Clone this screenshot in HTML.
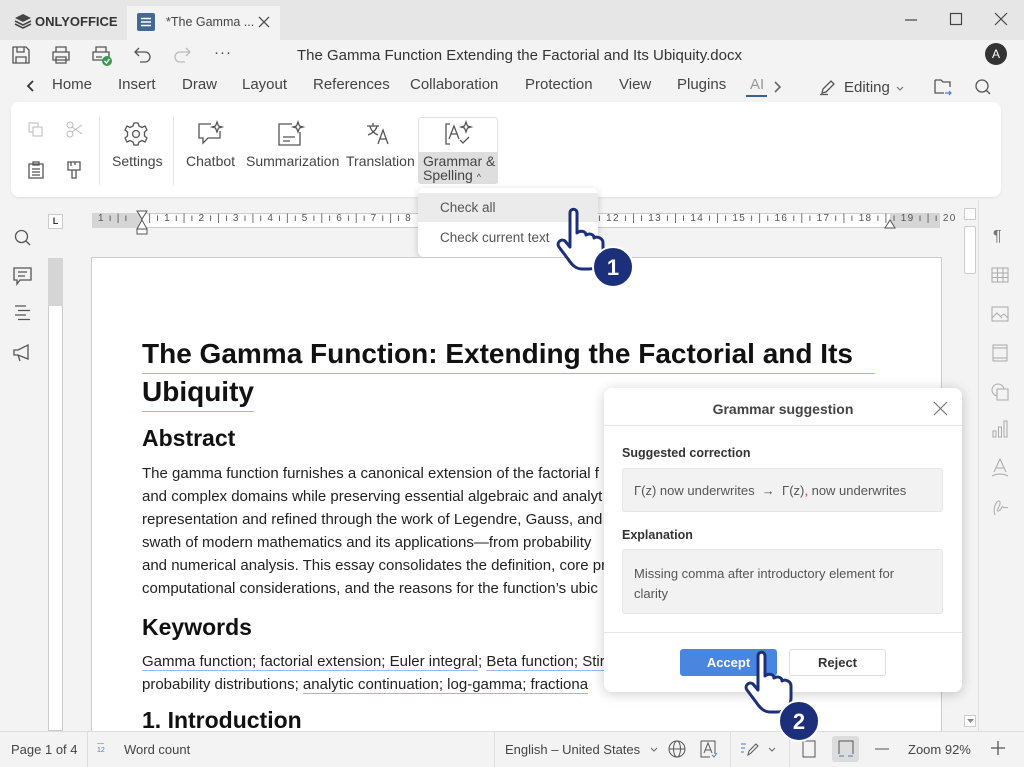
<!DOCTYPE html>
<html><head><meta charset="utf-8"><style>
*{margin:0;padding:0;box-sizing:border-box}
body{width:1024px;height:767px;overflow:hidden;background:#f3f3f3;font-family:"Liberation Sans","DejaVu Sans",sans-serif;color:#333;position:relative}
.a{position:absolute}
.t{position:absolute;white-space:nowrap}
svg{position:absolute;overflow:visible}
.ic{fill:none;stroke:#555;stroke-width:1.3}
.doc{font-size:15px;color:#222;line-height:23px}
.u{border-bottom:1.5px solid #9bb8e8}
</style></head><body>
<!-- title bar -->
<div class="a" style="left:0;top:0;width:1024px;height:40px;background:#e6e6e6"></div>
<div class="a" style="left:127px;top:6px;width:153px;height:34px;background:#f3f3f3"></div>
<svg style="left:14px;top:13px" width="18" height="16"><path d="M9 1 L17 5 L9 9 L1 5Z" fill="#444"/><path d="M1 8 L9 12 L17 8 M1 11 L9 15 L17 11" stroke="#444" stroke-width="1.6" fill="none"/></svg>
<div class="t" style="left:35px;top:14px;font-size:13px;font-weight:bold;color:#333">ONLYOFFICE</div>
<div class="a" style="left:137px;top:13px;width:18px;height:18px;background:#446995;border-radius:2px"></div>
<svg style="left:141px;top:17px" width="10" height="10"><path d="M0 1.5H10M0 5H10M0 8.5H10" stroke="#fff" stroke-width="1.4"/></svg>
<div class="t" style="left:166px;top:15px;font-size:12.5px;color:#444">*The Gamma ...</div>
<svg style="left:259px;top:17px" width="10" height="10"><path d="M0 0L10 10M10 0L0 10" stroke="#555" stroke-width="1.3"/></svg>
<svg style="left:905px;top:19px" width="12" height="2"><path d="M0 1H12" stroke="#444" stroke-width="1.2"/></svg>
<svg style="left:950px;top:13px" width="12" height="12"><rect x=".5" y=".5" width="11" height="11" fill="none" stroke="#444" stroke-width="1.2"/></svg>
<svg style="left:995px;top:13px" width="12" height="12"><path d="M0 0L12 12M12 0L0 12" stroke="#444" stroke-width="1.2"/></svg>
<!-- quick bar -->
<svg style="left:12px;top:46px" width="18" height="18"><path class="ic" d="M1 1H14L17 4V17H1Z M5 1V6H12V1 M4 17V11H14V17"/></svg>
<svg style="left:52px;top:46px" width="18" height="18"><path class="ic" d="M4 6V1H14V6 M1 6H17V14H1Z M4 11H14V17H4Z"/></svg>
<svg style="left:92px;top:46px" width="20" height="20"><path class="ic" d="M4 6V1H14V6 M1 6H17V14H1Z M4 11H10"/><circle cx="15" cy="15" r="5" fill="#3a9a52"/><path d="M12.5 15L14.5 17L17.5 13" stroke="#fff" stroke-width="1.3" fill="none"/></svg>
<svg style="left:134px;top:47px" width="18" height="16"><path class="ic" d="M5 1L1 5L5 9 M1 5H11A5 5 0 0 1 11 15H6"/></svg>
<svg style="left:173px;top:47px" width="18" height="16"><path d="M13 1L17 5L13 9 M17 5H7A5 5 0 0 0 7 15H12" fill="none" stroke="#bbb" stroke-width="1.3"/></svg>
<div class="t" style="left:214px;top:44px;font-size:15px;color:#444;letter-spacing:1px">···</div>
<div class="t" style="left:297px;top:47px;font-size:15px;color:#333">The Gamma Function Extending the Factorial and Its Ubiquity.docx</div>
<div class="a" style="left:985px;top:43px;width:22px;height:22px;border-radius:50%;background:#333;color:#fff;font-size:12px;text-align:center;line-height:22px">A</div>
<!-- menu -->
<svg style="left:27px;top:80px" width="8" height="12"><path d="M6 1L1 6L6 11" stroke="#333" stroke-width="1.8" fill="none"/></svg>
<div class="t" style="top:76px;font-size:15px;color:#444;left:52px">Home</div>
<div class="t" style="top:76px;font-size:15px;color:#444;left:118px">Insert</div>
<div class="t" style="top:76px;font-size:15px;color:#444;left:182px">Draw</div>
<div class="t" style="top:76px;font-size:15px;color:#444;left:242px">Layout</div>
<div class="t" style="top:76px;font-size:15px;color:#444;left:313px">References</div>
<div class="t" style="top:76px;font-size:15px;color:#444;left:410px">Collaboration</div>
<div class="t" style="top:76px;font-size:15px;color:#444;left:525px">Protection</div>
<div class="t" style="top:76px;font-size:15px;color:#444;left:619px">View</div>
<div class="t" style="top:76px;font-size:15px;color:#444;left:677px">Plugins</div>
<div class="t" style="top:76px;font-size:15px;color:#999;left:750px">AI</div>
<div class="a" style="left:746px;top:95px;width:21px;height:2px;background:#3d5f8d"></div>
<svg style="left:774px;top:81px" width="8" height="12"><path d="M1 1L6 6L1 11" stroke="#666" stroke-width="1.6" fill="none"/></svg>
<svg style="left:820px;top:79px" width="16" height="16"><path class="ic" d="M2 14L3 10L11 2L14 5L6 13Z M0 15.5H8"/></svg>
<div class="t" style="left:844px;top:79px;font-size:15px;color:#444">Editing</div>
<svg style="left:896px;top:86px" width="8" height="5"><path d="M1 1L4 4L7 1" stroke="#666" fill="none"/></svg>
<svg style="left:934px;top:78px" width="18" height="18"><path class="ic" d="M1 2H7L9 4H16V9 M1 2V15H10"/><path d="M11 15H17M15 13L17 15L15 17" stroke="#4a7bd0" stroke-width="1.2" fill="none"/></svg>
<svg style="left:975px;top:79px" width="16" height="16"><circle cx="7" cy="7" r="6" class="ic"/><path d="M11 11L15 15" class="ic"/></svg>
<!-- toolbar panel -->
<div class="a" style="left:11px;top:102px;width:990px;height:95px;background:#fff;border-radius:8px;box-shadow:0 1px 2px rgba(0,0,0,.08)"></div>
<svg style="left:28px;top:122px" width="16" height="16"><rect x="1" y="1" width="9" height="9" fill="none" stroke="#bbb"/><rect x="5" y="5" width="9" height="9" fill="#fff" stroke="#bbb"/></svg>
<svg style="left:66px;top:121px" width="17" height="17"><circle cx="4" cy="4" r="3" fill="none" stroke="#bbb"/><circle cx="4" cy="13" r="3" fill="none" stroke="#bbb"/><path d="M6 6L16 13M6 11L16 4" stroke="#bbb"/></svg>
<svg style="left:28px;top:161px" width="16" height="18"><path class="ic" d="M1 3H15V17H1Z M5 1H11V4H5Z M4 8H12M4 11H12M4 14H12"/></svg>
<svg style="left:67px;top:161px" width="14" height="18"><path class="ic" d="M1 1H13V9H1Z M5 9V17H9V9 M4 1V5 M8 1V4"/></svg>
<div class="a" style="left:99px;top:117px;width:1px;height:68px;background:#e4e4e4"></div>
<svg style="left:124px;top:122px" width="24" height="24"><circle cx="12" cy="12" r="3.5" class="ic"/><path class="ic" d="M10 1H14L15 4L18 5.5L21 4L23 8L20.5 10V14L23 16L21 20L18 18.5L15 20L14 23H10L9 20L6 18.5L3 20L1 16L3.5 14V10L1 8L3 4L6 5.5L9 4Z"/></svg>
<div class="t" style="left:112px;top:153px;font-size:14px;color:#444">Settings</div>
<div class="a" style="left:173px;top:117px;width:1px;height:68px;background:#e4e4e4"></div>
<svg style="left:197px;top:122px" width="26" height="24"><path class="ic" d="M14 2H2V16H6V21L11 16H23V9"/><path d="M20 0L21.5 4L25 5L21.5 6L20 10L18.5 6L15 5L18.5 4Z" class="ic" stroke-width="1.1"/></svg>
<div class="t" style="left:186px;top:153px;font-size:14px;color:#444">Chatbot</div>
<svg style="left:278px;top:122px" width="26" height="24"><path class="ic" d="M14 2H1V23H22V10 M5 15H17M5 19H12"/><path d="M20 0L21.5 4L25 5L21.5 6L20 10L18.5 6L15 5L18.5 4Z" class="ic" stroke-width="1.1"/></svg>
<div class="t" style="left:246px;top:153px;font-size:14px;color:#444">Summarization</div>
<svg style="left:366px;top:122px" width="26" height="24"><path class="ic" d="M1 4H13M7 1V4M4 4C5 9 9 12 12 13M11 4C10 9 5 12 2 13"/><path class="ic" d="M12 22L17 8L22 22M14 17H20"/></svg>
<div class="t" style="left:346px;top:153px;font-size:14px;color:#444">Translation</div>
<svg style="left:375px;top:175px" width="7" height="4"><path d=".5 .5L3.5 3.5L6.5 .5" stroke="#777" fill="none"/></svg>
<div class="a" style="left:418px;top:117px;width:80px;height:67px;border-radius:3px;background:#fff;border:1px solid #e2e2e2"></div>
<div class="a" style="left:418px;top:152px;width:80px;height:32px;background:#dedede;border-radius:0 0 3px 3px"></div>
<svg style="left:445px;top:122px" width="28" height="24"><path class="ic" d="M5 2H1V22H5"/><path class="ic" d="M4 17L9 4L14 17M6 12H12"/><path class="ic" d="M15 18L18 21L24 15"/><path d="M21 0L22.5 4L26 5L22.5 6L21 10L19.5 6L16 5L19.5 4Z" class="ic" stroke-width="1.1"/></svg>
<div class="t" style="left:423px;top:154px;font-size:14px;color:#444;line-height:14px">Grammar &amp;<br>Spelling <span style="font-size:9px">^</span></div>
<!-- left sidebar -->
<svg style="left:14px;top:229px" width="18" height="18"><circle cx="7.5" cy="7.5" r="6" class="ic"/><path d="M12 12L16 16" class="ic"/></svg>
<svg style="left:13px;top:267px" width="20" height="20"><path class="ic" d="M1 1H18V13H7L4 17V13H1Z M5 5H14M5 9H12"/></svg>
<svg style="left:14px;top:305px" width="18" height="16"><path class="ic" d="M1 1H12M4 5.5H16M1 10H12M4 14.5H16"/></svg>
<svg style="left:13px;top:344px" width="20" height="18"><path class="ic" d="M1 6H5L15 1V15L5 11H1Z M5 11L7 17"/></svg>
<!-- ruler -->
<div class="a" style="left:48px;top:214px;width:15px;height:15px;background:#fff;border:1px solid #ccc;font-size:9px;font-weight:bold;text-align:center;line-height:13px">L</div>
<div class="a" style="left:92px;top:213px;width:848px;height:15px;background:#fff;border:1px solid #ccc"></div>
<div class="a" style="left:92px;top:213px;width:50px;height:15px;background:#d5d5d5"></div>
<div class="a" style="left:890px;top:213px;width:50px;height:15px;background:#d5d5d5"></div>
<div class="t" style="left:98px;top:213px;font-size:10px;color:#555;letter-spacing:1.2px">1 ı | ı &nbsp;&nbsp;ı | ı 1 ı | ı 2 ı | ı 3 ı | ı 4 ı | ı 5 ı | ı 6 ı | ı 7 ı | ı 8</div>
<div class="t" style="left:598px;top:213px;font-size:10px;color:#555;letter-spacing:1.3px">ı 12 ı | ı 13 ı | ı 14 ı | ı 15 ı | ı 16 ı | ı 17 ı | ı 18 ı | ı 19 ı | ı 20</div>
<svg style="left:136px;top:210px" width="12" height="25"><path d="M1 1H11L6 9Z M1 19L6 10L11 19Z" fill="#fff" stroke="#555"/><rect x="1" y="19" width="10" height="5" fill="#fff" stroke="#555"/></svg>
<svg style="left:884px;top:219px" width="12" height="10"><path d="M1 9L6 1L11 9Z" fill="#fff" stroke="#555"/></svg>
<!-- dropdown -->
<div class="a" style="left:418px;top:188px;width:180px;height:69px;background:#fff;border-radius:6px;box-shadow:0 2px 8px rgba(0,0,0,.18)"></div>
<div class="a" style="left:418px;top:193px;width:180px;height:29px;background:#ebebeb"></div>
<div class="t" style="left:440px;top:200px;font-size:13.5px;color:#555">Check all</div>
<div class="t" style="left:440px;top:230px;font-size:13.5px;color:#555">Check current text</div>
<!-- vertical ruler -->
<div class="a" style="left:48px;top:258px;width:15px;height:473px;background:#fff;border:1px solid #ccc"></div>
<div class="a" style="left:48px;top:258px;width:15px;height:48px;background:#d5d5d5"></div>
<!-- page -->
<div class="a" style="left:91px;top:257px;width:851px;height:480px;background:#fff;border:1px solid #ccc"></div>
<div class="t" style="left:142px;top:335px;font-size:28px;font-weight:bold;color:#111;line-height:38px;border-bottom:1.5px solid #9bb8e8;width:733px">The Gamma Function: Extending the Factorial and Its</div>
<div class="t" style="left:142px;top:373px;font-size:28px;font-weight:bold;color:#111;line-height:38px;border-bottom:1.5px solid #9bb8e8">Ubiquity</div>
<div class="t" style="left:142px;top:425px;font-size:23px;font-weight:bold;color:#111">Abstract</div>
<div class="t doc" style="left:142px;top:462px">The gamma function furnishes a canonical extension of the factorial f<br>and complex domains while preserving essential algebraic and analyt<br>representation and refined through the work of Legendre, Gauss, and<br>swath of modern mathematics and its applications—from probability<br>and numerical analysis. This essay consolidates the definition, core pr<br>computational considerations, and the reasons for the function’s ubic</div>
<div class="t" style="left:142px;top:614px;font-size:23px;font-weight:bold;color:#111">Keywords</div>
<div class="t doc" style="left:142px;top:650px"><span class="u">Gamma function; factorial extension; Euler integral</span>; <span class="u">Beta function; Stir</span><br>probability distributions; <span class="u">analytic continuation; log-gamma; fractiona</span></div>
<div class="a" style="left:142px;top:707px;width:480px;height:24px;overflow:hidden"><div class="t" style="left:0;top:0;font-size:23px;font-weight:bold;color:#111">1. Introduction</div></div>
<!-- scrollbar -->
<div class="a" style="left:963px;top:207px;width:14px;height:524px;background:#f3f3f3"></div>
<div class="a" style="left:964px;top:208px;width:12px;height:12px;border:1px solid #ccc;background:#fff"></div>
<div class="a" style="left:964px;top:226px;width:12px;height:48px;border:1px solid #ccc;background:#fff;border-radius:2px"></div>
<div class="a" style="left:964px;top:715px;width:12px;height:12px;border:1px solid #ccc;background:#fff"></div>
<svg style="left:967px;top:719px" width="7" height="4"><path d="M0 0H7L3.5 4Z" fill="#888"/></svg>
<div class="a" style="left:978px;top:200px;width:1px;height:531px;background:#ddd"></div>
<!-- right sidebar -->
<div class="t" style="left:993px;top:228px;font-size:16px;color:#777">¶</div>
<svg style="left:991px;top:267px" width="18" height="16"><path d="M1 1H17V15H1Z M1 6H17M1 10.5H17M6.5 1V15M12 1V15" fill="none" stroke="#aaa"/></svg>
<svg style="left:991px;top:306px" width="18" height="16"><path d="M1 1H17V15H1Z M1 12L6 7L11 12M10 10L13 8L17 12" fill="none" stroke="#aaa"/></svg>
<svg style="left:991px;top:344px" width="18" height="18"><path d="M2 1H16V17H2Z M2 4H16M2 14H16" fill="none" stroke="#aaa"/></svg>
<svg style="left:991px;top:383px" width="18" height="18"><circle cx="7" cy="7" r="6" fill="none" stroke="#aaa"/><rect x="6" y="6" width="11" height="11" fill="#f3f3f3" stroke="#aaa"/></svg>
<svg style="left:991px;top:420px" width="18" height="18"><path d="M2 11H5V17H2Z M7.5 7H10.5V17H7.5Z M13 1H16V17H13Z" fill="none" stroke="#aaa"/></svg>
<svg style="left:991px;top:458px" width="18" height="20"><path d="M3 14L9 1L15 14M5 10H13M1 18Q9 14 17 18" fill="none" stroke="#aaa"/></svg>
<svg style="left:991px;top:497px" width="18" height="20"><path d="M4 18C1 10 7 1 9 5C10 9 4 14 7 14C10 14 11 8 12 10C13 12 15 9 17 11" fill="none" stroke="#aaa"/></svg>
<!-- grammar dialog -->
<div class="a" style="left:604px;top:388px;width:358px;height:304px;background:#fff;border-radius:8px;box-shadow:0 2px 12px rgba(0,0,0,.2)"></div>
<div class="a" style="left:604px;top:425px;width:358px;height:1px;background:#e6e6e6"></div>
<div class="t" style="left:604px;top:401px;width:358px;text-align:center;font-size:14px;font-weight:bold;color:#444">Grammar suggestion</div>
<svg style="left:934px;top:402px" width="13" height="13"><path d="M0 0L13 13M13 0L0 13" stroke="#777" stroke-width="1.2"/></svg>
<div class="t" style="left:622px;top:446px;font-size:12.5px;font-weight:bold;color:#333">Suggested correction</div>
<div class="a" style="left:622px;top:468px;width:321px;height:44px;background:#f2f2f2;border:1px solid #e6e6e6;border-radius:3px"></div>
<div class="t" style="left:634px;top:483px;font-size:13px;color:#555">Γ(z) now underwrites &nbsp;→ &nbsp;Γ(z)<span style="color:#e33">,</span> now underwrites</div>
<div class="t" style="left:622px;top:528px;font-size:12.5px;font-weight:bold;color:#333">Explanation</div>
<div class="a" style="left:622px;top:549px;width:321px;height:65px;background:#f2f2f2;border:1px solid #e6e6e6;border-radius:3px"></div>
<div class="t" style="left:634px;top:564px;font-size:13px;color:#555;line-height:20px">Missing comma after introductory element for<br>clarity</div>
<div class="a" style="left:604px;top:632px;width:358px;height:1px;background:#e6e6e6"></div>
<div class="a" style="left:680px;top:649px;width:97px;height:27px;background:#4a86e0;border-radius:3px;color:#fff;font-size:13px;font-weight:bold;text-align:center;line-height:27px">Accept</div>
<div class="a" style="left:789px;top:649px;width:97px;height:27px;background:#fff;border:1px solid #ddd;border-radius:3px;color:#333;font-size:13px;font-weight:bold;text-align:center;line-height:25px">Reject</div>
<!-- status bar -->
<div class="a" style="left:0;top:731px;width:1024px;height:36px;background:#f3f3f3;border-top:1px solid #ddd"></div>
<div class="t" style="left:11px;top:742px;font-size:13px;color:#444">Page 1 of 4</div>
<div class="a" style="left:87px;top:732px;width:1px;height:35px;background:#ddd"></div>
<div class="t" style="left:97px;top:740px;font-size:7px;color:#4a7bd0;line-height:7px">—<br>12</div>
<div class="t" style="left:124px;top:742px;font-size:13px;color:#444">Word count</div>
<div class="a" style="left:494px;top:732px;width:1px;height:35px;background:#ddd"></div>
<div class="t" style="left:505px;top:742px;font-size:13px;color:#444">English – United States</div>
<svg style="left:650px;top:747px" width="8" height="5"><path d="M1 1L4 4L7 1" stroke="#666" fill="none"/></svg>
<svg style="left:668px;top:740px" width="18" height="18"><circle cx="9" cy="9" r="8" fill="none" stroke="#555"/><ellipse cx="9" cy="9" rx="3.5" ry="8" fill="none" stroke="#555"/><path d="M1 9H17" stroke="#555"/></svg>
<svg style="left:700px;top:740px" width="18" height="18"><path d="M1 1H15V14M1 1V17H10" fill="none" stroke="#555"/><path d="M4 13L8 3L12 13M5.5 10H10.5" fill="none" stroke="#555"/><path d="M12 15L14 17L17 13" stroke="#4a7bd0" fill="none"/></svg>
<div class="a" style="left:730px;top:732px;width:1px;height:35px;background:#ddd"></div>
<svg style="left:740px;top:741px" width="20" height="16"><path d="M1 3H6M1 7H5M1 11H4" stroke="#4a7bd0"/><path d="M8 14L9 10L16 3L18 5L11 12Z" fill="none" stroke="#555"/></svg>
<svg style="left:768px;top:747px" width="8" height="5"><path d="M1 1L4 4L7 1" stroke="#666" fill="none"/></svg>
<div class="a" style="left:789px;top:732px;width:1px;height:35px;background:#ddd"></div>
<svg style="left:802px;top:740px" width="14" height="18"><path d="M1 1H13V17H1Z" fill="none" stroke="#555"/></svg>
<div class="a" style="left:832px;top:736px;width:27px;height:26px;background:#dcdcdc;border-radius:3px"></div>
<svg style="left:837px;top:740px" width="18" height="18"><path d="M2 14V1H16V14" fill="none" stroke="#555"/><path d="M2 16H7M11 16H16" stroke="#4a7bd0"/></svg>
<svg style="left:875px;top:748px" width="14" height="2"><path d="M0 1H14" stroke="#555"/></svg>
<div class="t" style="left:908px;top:742px;font-size:13px;color:#444">Zoom 92%</div>
<svg style="left:991px;top:741px" width="14" height="14"><path d="M7 0V14M0 7H14" stroke="#555" stroke-width="1.3"/></svg>
<!-- hand 1 -->
<svg style="left:556px;top:205px" width="80" height="85"><path d="M14 8C14 3 21 3 21 8V28C24 25 30 26 30 30C33 28 38 29 38 33C41 31 47 33 47 38V50C47 58 41 64 33 64H26C20 64 16 60 12 54L3 42C0 38 5 33 9 36L14 42Z" fill="#fff" stroke="#1c2f7a" stroke-width="3" stroke-linejoin="round"/><circle cx="57" cy="62" r="20" fill="#1c2f7a" stroke="#fff" stroke-width="2"/><text x="57" y="70" text-anchor="middle" font-family="Liberation Sans" font-weight="bold" font-size="22" fill="#fff">1</text></svg>
<!-- hand 2 -->
<svg style="left:744px;top:648px" width="80" height="95"><path d="M14 8C14 3 21 3 21 8V28C24 25 30 26 30 30C33 28 38 29 38 33C41 31 47 33 47 38V50C47 58 41 64 33 64H26C20 64 16 60 12 54L3 42C0 38 5 33 9 36L14 42Z" fill="#fff" stroke="#1c2f7a" stroke-width="3" stroke-linejoin="round"/><circle cx="55" cy="73" r="20" fill="#1c2f7a" stroke="#fff" stroke-width="2"/><text x="55" y="81" text-anchor="middle" font-family="Liberation Sans" font-weight="bold" font-size="22" fill="#fff">2</text></svg>
</body></html>
